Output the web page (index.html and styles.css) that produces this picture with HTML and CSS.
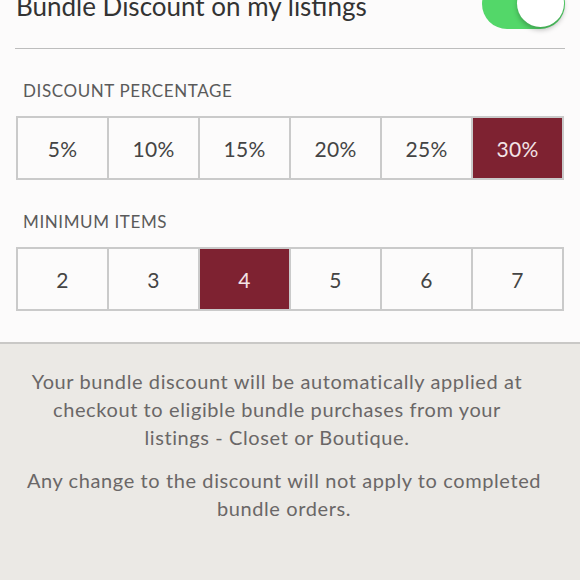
FILE: index.html
```html
<!DOCTYPE html>
<html lang="en">
<head>
  <meta charset="UTF-8" />
  <meta name="viewport" content="width=device-width, initial-scale=1.0" />
  <title>Bundle Discount</title>
  <link rel="stylesheet" href="styles.css">
</head>
<body>
  <div class="settings">
    <div class="header">
      <div class="title">Bundle Discount on my listings</div>
      <div class="toggle on"><span class="knob"></span></div>
    </div>

    <div class="label">DISCOUNT PERCENTAGE</div>
    <div class="choices">
      <div class="choice">5%</div>
      <div class="choice">10%</div>
      <div class="choice">15%</div>
      <div class="choice">20%</div>
      <div class="choice">25%</div>
      <div class="choice selected">30%</div>
    </div>

    <div class="label">MINIMUM ITEMS</div>
    <div class="choices">
      <div class="choice">2</div>
      <div class="choice">3</div>
      <div class="choice selected">4</div>
      <div class="choice">5</div>
      <div class="choice">6</div>
      <div class="choice">7</div>
    </div>
  </div>

  <div class="info">
    <p class="applied">Your bundle discount will be automatically applied at checkout to eligible bundle purchases from your listings - Closet or Boutique.</p>
    <p>Any change to the discount will not apply to completed bundle orders.</p>
  </div>
</body>
</html>
```

FILE: styles.css
```css
body { margin: 0; font-family: Lato, "Open Sans", sans-serif; background: #ebe9e5; overflow: hidden; }

.settings { background: #fcfbfb; padding: 0 15px 31px; border-bottom: 2px solid #c9c8c6; }
.header { display: flex; justify-content: space-between; align-items: flex-start; height: 69px; margin-top: -21px; border-bottom: 1px solid #bdbdbd; }
.title { font-size: 26px; line-height: 50px; padding: 2px 0 0 1px; color: #333; }
.toggle { position: relative; width: 83px; height: 50px; border-radius: 25px; background: #e5e5e5; }
.toggle.on { background: #53d769; }
.knob { position: absolute; top: 1px; right: 1px; width: 47px; height: 47px; border-radius: 50%; background: #fff; box-shadow: 0 3px 5px rgba(0,0,0,0.25); }

.label { font-size: 17px; line-height: 20px; color: #5a5a5a; margin: 32px 0 15px 8px; letter-spacing: 0.6px; }
.choices { display: grid; grid-template-columns: repeat(6, 1fr); gap: 2px; border: 2px solid #cacaca; background: #cacaca; margin: 0 1px; }
.choice { height: 60px; display: flex; align-items: center; justify-content: center; background: #fcfbfb; font-size: 21px; color: #444; letter-spacing: 0.3px; }
.choice.selected { background: #7e2231; color: #f3e4e6; }

.info { padding: 23px 36px 0 24px; text-align: center; color: #6a6767; font-size: 20px; line-height: 28px; letter-spacing: 0.6px; }
.info p { margin: 0 0 15px; }
.info .applied { padding-right: 14px; }
```
